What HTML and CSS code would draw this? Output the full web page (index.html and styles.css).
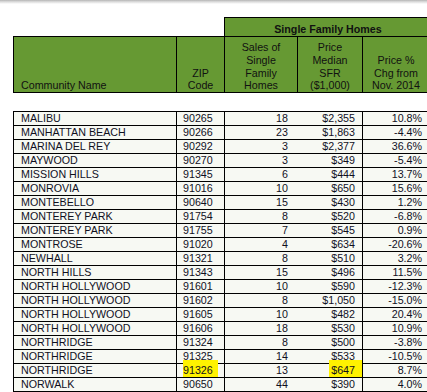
FILE: index.html
```html
<!DOCTYPE html>
<html>
<head>
<meta charset="utf-8">
<link rel="stylesheet" href="styles.css">
</head>
<body>
<div class="topbar"></div>
<div class="sheet">
  <div class="head">
    <div class="blank"></div>
    <div class="band">Single Family Homes</div>
    <div class="h h-name">Community Name</div>
    <div class="h">ZIP<br>Code</div>
    <div class="h">Sales of<br>Single<br>Family<br>Homes</div>
    <div class="h">Price<br>Median<br>SFR<br>($1,000)</div>
    <div class="h h-last">Price %<br>Chg from<br>Nov. 2014</div>
  </div>
  <div class="rows">
    <div class="row"><div class="name">MALIBU</div><div class="zip">90265</div><div class="sales">18</div><div class="price">$2,355</div><div class="pct">10.8%</div></div>
    <div class="row"><div class="name">MANHATTAN BEACH</div><div class="zip">90266</div><div class="sales">23</div><div class="price">$1,863</div><div class="pct">-4.4%</div></div>
    <div class="row"><div class="name">MARINA DEL REY</div><div class="zip">90292</div><div class="sales">3</div><div class="price">$2,377</div><div class="pct">36.6%</div></div>
    <div class="row"><div class="name">MAYWOOD</div><div class="zip">90270</div><div class="sales">3</div><div class="price">$349</div><div class="pct">-5.4%</div></div>
    <div class="row"><div class="name">MISSION HILLS</div><div class="zip">91345</div><div class="sales">6</div><div class="price">$444</div><div class="pct">13.7%</div></div>
    <div class="row"><div class="name">MONROVIA</div><div class="zip">91016</div><div class="sales">10</div><div class="price">$650</div><div class="pct">15.6%</div></div>
    <div class="row"><div class="name">MONTEBELLO</div><div class="zip">90640</div><div class="sales">15</div><div class="price">$430</div><div class="pct">1.2%</div></div>
    <div class="row"><div class="name">MONTEREY PARK</div><div class="zip">91754</div><div class="sales">8</div><div class="price">$520</div><div class="pct">-6.8%</div></div>
    <div class="row"><div class="name">MONTEREY PARK</div><div class="zip">91755</div><div class="sales">7</div><div class="price">$545</div><div class="pct">0.9%</div></div>
    <div class="row"><div class="name">MONTROSE</div><div class="zip">91020</div><div class="sales">4</div><div class="price">$634</div><div class="pct">-20.6%</div></div>
    <div class="row"><div class="name">NEWHALL</div><div class="zip">91321</div><div class="sales">8</div><div class="price">$510</div><div class="pct">3.2%</div></div>
    <div class="row"><div class="name">NORTH HILLS</div><div class="zip">91343</div><div class="sales">15</div><div class="price">$496</div><div class="pct">11.5%</div></div>
    <div class="row"><div class="name">NORTH HOLLYWOOD</div><div class="zip">91601</div><div class="sales">10</div><div class="price">$590</div><div class="pct">-12.3%</div></div>
    <div class="row"><div class="name">NORTH HOLLYWOOD</div><div class="zip">91602</div><div class="sales">8</div><div class="price">$1,050</div><div class="pct">-15.0%</div></div>
    <div class="row"><div class="name">NORTH HOLLYWOOD</div><div class="zip">91605</div><div class="sales">10</div><div class="price">$482</div><div class="pct">20.4%</div></div>
    <div class="row"><div class="name">NORTH HOLLYWOOD</div><div class="zip">91606</div><div class="sales">18</div><div class="price">$530</div><div class="pct">10.9%</div></div>
    <div class="row"><div class="name">NORTHRIDGE</div><div class="zip">91324</div><div class="sales">8</div><div class="price">$500</div><div class="pct">-3.8%</div></div>
    <div class="row"><div class="name">NORTHRIDGE</div><div class="zip">91325</div><div class="sales">14</div><div class="price">$533</div><div class="pct">-10.5%</div></div>
    <div class="row"><div class="name">NORTHRIDGE</div><div class="zip"><span class="hl hl-zip"><span class="hl-text">91326</span></span></div><div class="sales">13</div><div class="price"><span class="hl hl-price"><span class="hl-text">$647</span></span></div><div class="pct">8.7%</div></div>
    <div class="row row-last"><div class="name">NORWALK</div><div class="zip">90650</div><div class="sales">44</div><div class="price">$390</div><div class="pct">4.0%</div></div>
  </div>
</div>
</body>
</html>
```

FILE: styles.css
```css
html, body {
  margin: 0;
  padding: 0;
  overflow: hidden;
  background: #ffffff;
}

body {
  width: 427px;
  height: 392px;
  font-family: "Liberation Sans", Arial, sans-serif;
  font-size: 10.7px;
}

.topbar {
  height: 4px;
  background: linear-gradient(to bottom, #b4b4b4, #d8d8d8 40%, #ffffff);
}

.sheet {
  margin: 13px 0 0 13px;
  width: 417px;
}

.head {
  display: grid;
  grid-template-columns: 163px 48px 73px 65px 68px;
  grid-template-rows: 19px 57px;
  color: #111111;
}

.blank {
  grid-column: 1 / 3;
}

.band {
  grid-column: 3 / 6;
  box-sizing: border-box;
  background: #669933;
  border: 1px solid #000;
  border-bottom: none;
  font-weight: bold;
  line-height: 12.7px;
  display: flex;
  align-items: flex-end;
  justify-content: center;
  padding-left: 2px;
}

.h {
  box-sizing: border-box;
  background: #669933;
  border-top: 1px solid #000;
  border-bottom: 1px solid #000;
  border-left: 1px solid #000;
  line-height: 12.7px;
  display: flex;
  flex-direction: column;
  justify-content: flex-end;
  align-items: center;
  text-align: center;
}

.h-name {
  align-items: flex-start;
  text-align: left;
  padding-left: 7px;
}

.h-last {
  border-right: 1px solid #000;
}

.rows {
  margin-top: 18px;
  color: #10101e;
}

.row {
  display: grid;
  grid-template-columns: 163px 48px 73px 65px 68px;
  height: 14px;
}

.row > div {
  box-sizing: border-box;
  background: #f7f9f3;
  border-top: 1px solid #000;
  line-height: 13px;
  white-space: nowrap;
}

.row-last {
  height: 15px;
}

.row-last > div {
  border-bottom: 1px solid #000;
}

.name {
  border-left: 1px solid #000;
  padding-left: 7px;
}

.zip {
  border-left: 1px solid #000;
  padding-left: 6px;
}

.sales {
  border-left: 1px solid #000;
  text-align: right;
  padding-right: 9px;
}

.price {
  text-align: right;
  padding-right: 7px;
}

.pct {
  border-left: 1px solid #000;
  border-right: 1px solid #000;
  text-align: right;
  padding-right: 7px;
}

.hl {
  position: relative;
}

.hl::before {
  content: "";
  position: absolute;
  top: -4px;
  bottom: -1px;
  background: #fff200;
}

.hl-zip::before {
  left: 0;
  right: -5px;
}

.hl-price::before {
  left: -2px;
  right: -7px;
}

.hl-text {
  position: relative;
}
```
